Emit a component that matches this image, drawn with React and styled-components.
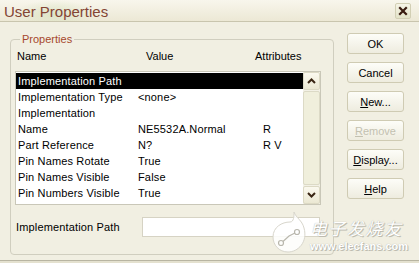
import React from "react";
import styled, { createGlobalStyle } from "styled-components";

const Global = createGlobalStyle`
  html, body { margin: 0; padding: 0; background: #e4e1cf; }
  body { font-family: "Liberation Sans", Arial, sans-serif; font-size: 11px; }
`;

const rows = [
  { name: "Implementation Path", value: "", attr: "", selected: true },
  { name: "Implementation Type", value: "<none>", attr: "" },
  { name: "Implementation", value: "", attr: "" },
  { name: "Name", value: "NE5532A.Normal", attr: "R" },
  { name: "Part Reference", value: "N?", attr: "R V" },
  { name: "Pin Names Rotate", value: "True", attr: "" },
  { name: "Pin Names Visible", value: "False", attr: "" },
  { name: "Pin Numbers Visible", value: "True", attr: "" },
];

const buttons = [
  { label: "OK" },
  { label: "Cancel" },
  { label: "New...", key: "N" },
  { label: "Remove", key: "R", disabled: true },
  { label: "Display...", key: "D" },
  { label: "Help", key: "H" },
];

export default function App() {
  return (
    <>
      <Global />
      <Window>
        <TitleBar>
          <Title>User Properties</Title>
          <CloseButton>
            <svg width="10" height="10" viewBox="0 0 10 10">
              <path d="M2 2 L8 8 M8 2 L2 8" stroke="#3a1c10" strokeWidth="2.2" strokeLinecap="square" />
            </svg>
          </CloseButton>
        </TitleBar>
        <Body>
          <Group>
            <Legend>Properties</Legend>
            <HeaderRow>
              <span>Name</span>
              <span>Value</span>
              <span>Attributes</span>
            </HeaderRow>
            <ListBox>
              <Rows>
                {rows.map((r) => (
                  <Row key={r.name} $selected={r.selected}>
                    <span>{r.name}</span>
                    <span>{r.value}</span>
                    <span>{r.attr}</span>
                  </Row>
                ))}
              </Rows>
              <ScrollBar>
                <ScrollButton>
                  <svg width="9" height="6" viewBox="0 0 9 6">
                    <path d="M1 5 L4.5 1.5 L8 5" fill="none" stroke="#3a2614" strokeWidth="2" />
                  </svg>
                </ScrollButton>
                <Thumb />
                <ScrollButton>
                  <svg width="9" height="6" viewBox="0 0 9 6">
                    <path d="M1 1 L4.5 4.5 L8 1" fill="none" stroke="#3a2614" strokeWidth="2" />
                  </svg>
                </ScrollButton>
              </ScrollBar>
            </ListBox>
            <PathRow>
              <span>Implementation Path</span>
              <TextInput />
            </PathRow>
          </Group>
          <ButtonColumn>
            {buttons.map((b) => (
              <Button key={b.label} $disabled={b.disabled}>
                {b.key ? (
                  <>
                    <u>{b.label[0]}</u>
                    {b.label.slice(1)}
                  </>
                ) : (
                  b.label
                )}
              </Button>
            ))}
          </ButtonColumn>
        </Body>
        <Watermark>
          <svg width="36" height="44" viewBox="0 0 36 44">
            <path
              d="M22 2 C24 8 30 10 32 18 C36 32 26 42 16 42 C7 42 1 35 1 27 C1 17 10 12 18 12 C22 12 22 6 22 2 Z"
              fill="#ffffff"
              fillOpacity="0.85"
              stroke="#d8d6cc"
              strokeWidth="1"
            />
            <circle cx="9" cy="33" r="2.5" fill="none" stroke="#b9b7ad" strokeWidth="1.2" />
            <circle cx="25" cy="22" r="2.5" fill="none" stroke="#b9b7ad" strokeWidth="1.2" />
            <path d="M11 31.5 L17 26 L23 23" fill="none" stroke="#b9b7ad" strokeWidth="1.2" />
          </svg>
          <MarkText>
            <MarkCn>电子发烧友</MarkCn>
            <MarkUrl>www.elecfans.com</MarkUrl>
          </MarkText>
        </Watermark>
      </Window>
    </>
  );
}

const Window = styled.div`
  position: relative;
  width: 419px;
  height: 260px;
  background: #f1efe2;
  border-bottom: 1px solid #b8b5a2;
  overflow: hidden;
`;

const TitleBar = styled.div`
  height: 22px;
  display: flex;
  align-items: center;
  justify-content: space-between;
  padding: 0 8px 0 4px;
  box-sizing: border-box;
  border-bottom: 1px solid #c9c5ae;
  background:
    radial-gradient(ellipse 40px 14px at 55px 14px, rgba(214, 226, 190, 0.7), rgba(214, 226, 190, 0) 100%),
    linear-gradient(to bottom, #f8f6ec, #ece8d5);
`;

const Title = styled.div`
  font-size: 15px;
  color: #834434;
  padding-top: 1px;
`;

const CloseButton = styled.div`
  width: 16px;
  height: 16px;
  box-sizing: border-box;
  border: 1px solid #d2cfb4;
  border-radius: 2px;
  background: linear-gradient(to bottom, #f6f4e6, #e3e3c8);
  display: flex;
  align-items: center;
  justify-content: center;
`;

const Body = styled.div`
  display: flex;
  align-items: flex-start;
  gap: 13px;
  padding: 11px 0 0 10px;
`;

const Group = styled.fieldset`
  margin: 0;
  width: 324px;
  height: 222px;
  box-sizing: border-box;
  padding: 4px 12px 0 4px;
  border: 1px solid #d0cebf;
  border-radius: 4px;
`;

const Legend = styled.legend`
  color: #a6472c;
  padding: 0 2px;
  margin-left: 5px;
  line-height: 13px;
`;

const HeaderRow = styled.div`
  display: grid;
  grid-template-columns: 129px 109px 1fr;
  padding-left: 2px;
  line-height: 13px;
  height: 13px;
  margin-bottom: 8px;
  color: #000;
`;

const ListBox = styled.div`
  display: flex;
  height: 134px;
  box-sizing: border-box;
  border: 1px solid #c9c7b8;
  background: #fff;
`;

const Rows = styled.div`
  flex: 1;
  padding-top: 1px;
`;

const Row = styled.div`
  display: grid;
  grid-template-columns: 120px 125px 1fr;
  height: 16px;
  line-height: 16px;
  padding-left: 2px;
  white-space: nowrap;
  letter-spacing: 0.15px;
  color: ${(p) => (p.$selected ? "#fff" : "#000")};
  background: ${(p) => (p.$selected ? "#000" : "transparent")};
`;

const ScrollBar = styled.div`
  width: 17px;
  display: flex;
  flex-direction: column;
  background: #f3f1e6;
`;

const ScrollButton = styled.div`
  height: 18px;
  box-sizing: border-box;
  border: 1px solid #dcd9c4;
  border-radius: 2px;
  background: linear-gradient(to bottom, #fbf9ef, #ebe8d3);
  display: flex;
  align-items: center;
  justify-content: center;
`;

const Thumb = styled.div`
  flex: 1;
  margin: 1px 0;
  box-sizing: border-box;
  border: 1px solid #dcdac6;
  border-radius: 2px;
  background: #f0efdc;
`;

const PathRow = styled.div`
  display: flex;
  align-items: center;
  margin-top: 12px;
  padding-left: 1px;
  gap: 22px;
  letter-spacing: 0.15px;
`;

const TextInput = styled.div`
  width: 178px;
  height: 20px;
  box-sizing: border-box;
  border: 1px solid #d6d3c4;
  background: #fff;
`;

const ButtonColumn = styled.div`
  display: flex;
  flex-direction: column;
  gap: 8px;
`;

const Button = styled.div`
  width: 57px;
  height: 21px;
  box-sizing: border-box;
  border: 1px solid #cfcbb3;
  border-radius: 3px;
  background: linear-gradient(to bottom, #fdfdf8, #eeecdf);
  display: flex;
  align-items: center;
  justify-content: center;
  color: ${(p) => (p.$disabled ? "#c3c1b0" : "#000")};
`;

const Watermark = styled.div`
  position: absolute;
  left: 272px;
  top: 210px;
  display: flex;
  align-items: flex-start;
  gap: 2px;
  pointer-events: none;
`;

const MarkText = styled.div`
  display: flex;
  flex-direction: column;
  padding-top: 5px;
`;

const MarkCn = styled.div`
  font-family: "Noto Sans CJK SC", sans-serif;
  font-size: 17px;
  line-height: 25px;
  font-style: italic;
  color: #fff;
  letter-spacing: 1.5px;
  text-shadow: 0 0 1px #a9a79c, 1px 1px 0 #c0beb2;
`;

const MarkUrl = styled.div`
  font-family: "Liberation Sans", Arial, sans-serif;
  font-weight: bold;
  font-size: 11px;
  line-height: 12px;
  color: #fff;
  text-shadow: 0 0 1px #a9a79c, 1px 1px 0 #c0beb2;
`;
